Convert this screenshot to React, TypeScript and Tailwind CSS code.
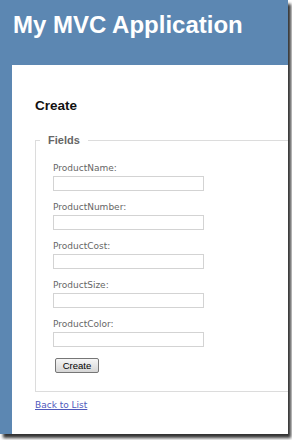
const fields = ['ProductName', 'ProductNumber', 'ProductCost', 'ProductSize', 'ProductColor'];

export default function App() {
  return (
    <div className="w-[292px] h-[440px] bg-white overflow-hidden">
      <div className="w-[288px] h-[434px] bg-[#5c87b2] flex flex-col shadow-[3px_4px_3px_rgba(0,0,0,0.8)]">
        {/* Header */}
        <header className="h-[65px] shrink-0 pl-[13px] pt-[13px]">
          <h1 className="text-[24px] leading-[24px] font-bold text-white font-['Liberation_Sans',Arial,sans-serif]">
            My MVC Application
          </h1>
        </header>

        {/* Page */}
        <div className="flex-1 min-h-0 flex pl-[12px]">
          <main className="flex-1 bg-white overflow-hidden pl-[23px] pt-[34px]">
            <h2 className="text-[13.5px] leading-[14px] font-bold text-[#111] font-['Liberation_Sans',Arial,sans-serif]">
              Create
            </h2>

            <fieldset className="mt-[21px] w-[290px] border border-[#dcdcdc] px-[4px] pb-[18px]">
              <legend className="px-[8px] text-[11px] leading-[13px] font-bold text-[#666] font-['Liberation_Sans',Arial,sans-serif]">
                Fields
              </legend>
              <div className="pl-[13px] pt-[16px] font-['DejaVu_Sans',Verdana,sans-serif]">
                {fields.map((f) => (
                  <div key={f} className="mb-[11px]">
                    <label className="block text-[9px] leading-[11px] text-[#666]">{f}:</label>
                    <input
                      type="text"
                      className="block mt-[2px] w-[151px] h-[15px] border border-[#d3d3d3] bg-white outline-none"
                    />
                  </div>
                ))}
                <button className="block ml-[2px] w-[44px] h-[15px] border border-[#767676] rounded-[2px] bg-gradient-to-b from-[#f6f6f6] to-[#d6d6d6] text-[9.5px] leading-[12px] text-black font-['Liberation_Sans',Arial,sans-serif]">
                  Create
                </button>
              </div>
            </fieldset>

            <div className="mt-[8px] font-['DejaVu_Sans',Verdana,sans-serif] text-[9px] leading-[11px]">
              <a href="#" className="text-[#505abc] underline">Back to List</a>
            </div>
          </main>
        </div>
      </div>
    </div>
  );
}
